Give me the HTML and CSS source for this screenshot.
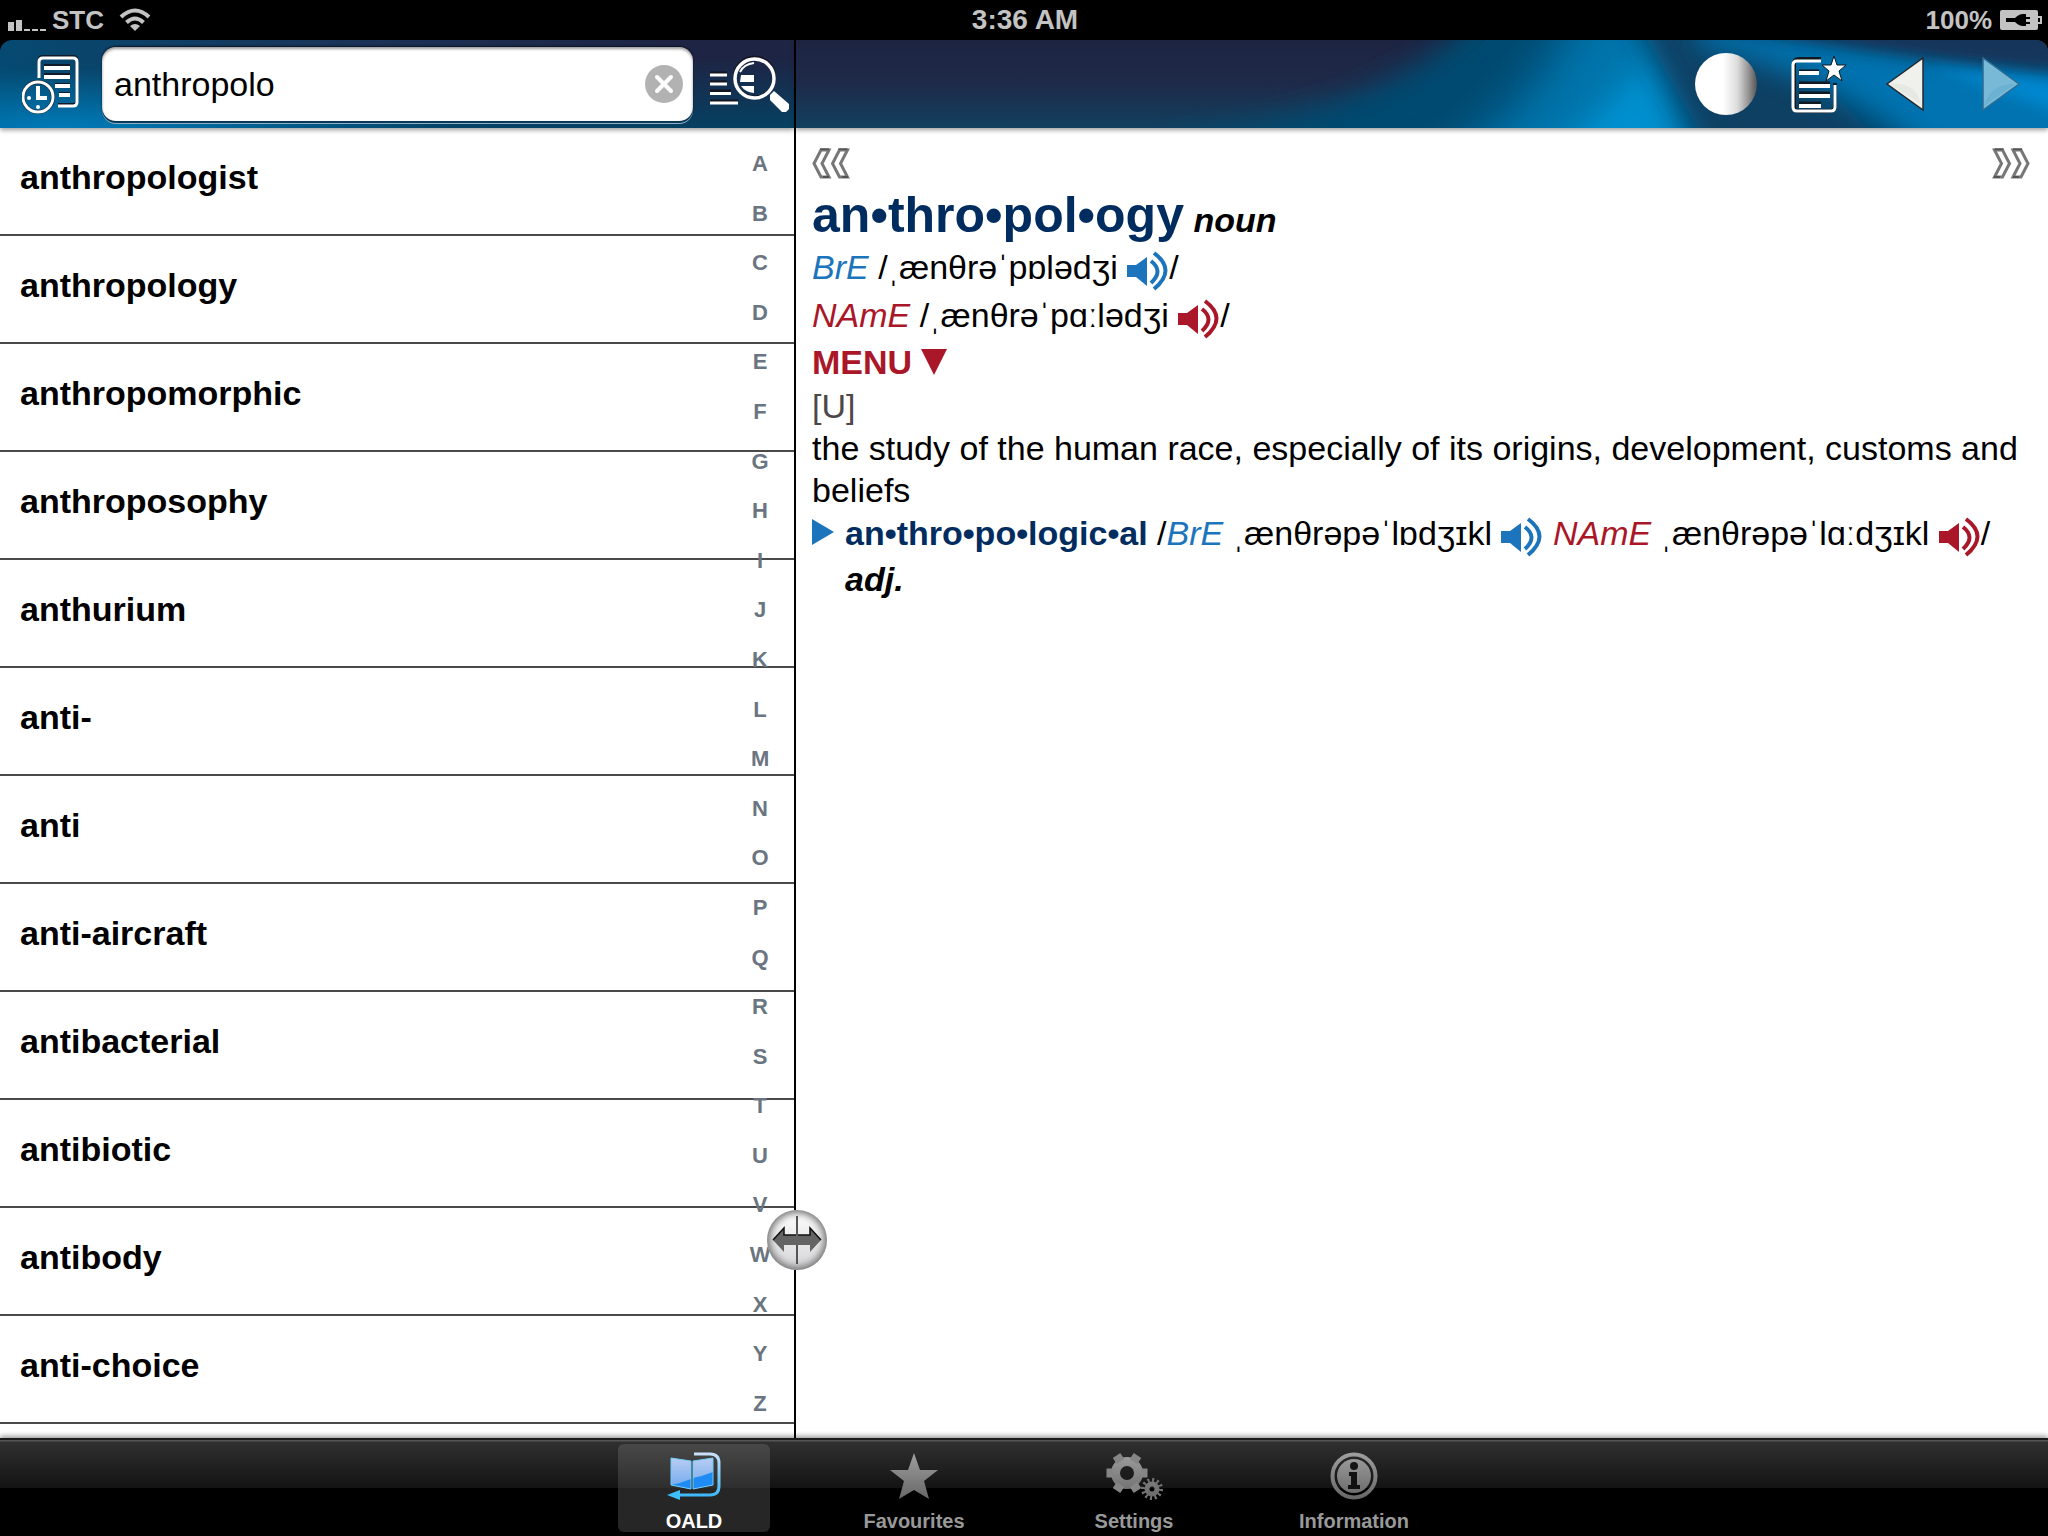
FILE: index.html
```html
<!DOCTYPE html>
<html lang="en">
<head>
    <meta charset="UTF-8">
    <meta name="viewport" content="width=device-width, initial-scale=1.0">
    <title>OALD - anthropology</title>
    <link rel="stylesheet" href="styles.css">
</head>
<body>
    <!-- shared icon shapes -->
    <svg class="defs" aria-hidden="true">
        <symbol id="speaker" viewBox="0 0 42 40">
            <path d="M0 14h9L20 6v29L9 26H0z" fill="currentColor"/>
            <path d="M24 10q13 10 0 22M27 2q23 17 0 36" fill="none" stroke="currentColor" stroke-width="4"/>
        </symbol>
        <symbol id="chevrons" viewBox="0 0 38 31">
            <path d="M9 2h8l-7 13.500l7 13.500h-8L2 15.500z" fill="none" stroke="#777" stroke-width="3"/>
            <path d="M27.500 2h8l-7 13.500l7 13.500h-8l-7-13.500z" fill="none" stroke="#777" stroke-width="3"/>
            <path d="M8 1h9M26.500 1h9M11 29h6M30 29h6" stroke="#333" stroke-width="1"/>
        </symbol>
    </svg>

    <div class="app">
        <header class="status">
            <div class="status-side">
                <svg width="39" height="12" viewBox="0 0 39 12" fill="#c3c3c3"><path d="M0 3h6v9H0zM8 1h6v11H8zM16 10h6v2h-6zM24 10h6v2h-6zM32 10h6v2h-6z"/></svg>
                <span class="carrier">STC</span>
                <svg width="32" height="24" viewBox="0 0 32 24" fill="none" stroke="#c3c3c3" stroke-width="4"><path d="M2 9q14-13 28 0M7.500 14.500q8.500-8 17 0"/><path d="M16 23l-5-5q5-4 10 0z" fill="#c3c3c3" stroke="none"/></svg>
            </div>
            <div class="clock">3:36 AM</div>
            <div class="status-side right">
                <span>100%</span>
                <svg width="42" height="20" viewBox="0 0 42 20"><path d="M2 0h34q2 0 2 2v4h4v8h-4v4q0 2-2 2H2q-2 0-2-2V2q0-2 2-2z" fill="#c3c3c3"/><path d="M38 8h2v4h-2z" fill="#000"/><path d="M6 8h9q4-4 8-4h3v3h4v2h-4v3h4v2h-4v2h-3q-4 0-8-4H6z" fill="#000"/></svg>
            </div>
        </header>

        <div class="panes">
            <aside class="list-pane">
                <div class="toolbar toolbar-left">
                    <button class="tool" type="button" aria-label="History">
                        <svg width="58" height="60" viewBox="0 0 58 60" fill="none">
                            <g stroke="#111a26" stroke-width="3" transform="translate(0 -1.500)"><path d="M17 24V8q0-4 4-4h30q4 0 4 4v40q0 4-4 4H36"/><path d="M22 13h26M22 22h26M33 32h15M37 41h11"/></g>
                            <g stroke="#fff"><path d="M17 24V8q0-4 4-4h30q4 0 4 4v40q0 4-4 4H36" stroke-width="3"/><path d="M22 14h26M22 23h26M33 32h15M37 41h11" stroke-width="4"/><circle cx="16" cy="43" r="15" stroke="#111a26" stroke-width="4"/><circle cx="16" cy="43" r="15" stroke-width="3"/><path d="M16 32v12h9" stroke-width="4"/></g>
                            <g fill="#fff"><circle cx="7" cy="44" r="2"/><circle cx="16" cy="53" r="2"/></g>
                        </svg>
                    </button>
                    <form class="search" role="search">
                        <input type="text" value="anthropolo" aria-label="Search">
                        <button class="clear" type="button" aria-label="Clear">
                            <svg width="38" height="38" viewBox="0 0 38 38"><circle cx="19" cy="19" r="19" fill="#b2b2b2"/><path d="M12 12l14 14M26 12L12 26" stroke="#fff" stroke-width="4" stroke-linecap="round"/></svg>
                        </button>
                    </form>
                    <button class="tool" type="button" aria-label="Full text search">
                        <svg width="80" height="58" viewBox="0 0 80 58" fill="none">
                            <path d="M0 18h17M0 27h17M0 36h21M0 46h28" stroke="#14141f" stroke-width="3"/>
                            <path d="M0 20h17M0 29h17M0 38.500h21M0 48h28" stroke="#fff" stroke-width="3"/>
                            <circle cx="44.500" cy="22" r="20" stroke="#14141f" stroke-width="3"/>
                            <circle cx="44.500" cy="23.500" r="19.500" stroke="#fff" stroke-width="3.500"/>
                            <path d="M31 20h13v7H30zM31 31h13v7q-9-1-13-7z" fill="#fff"/>
                            <path d="M30 17q4-8 14-9" stroke="#fff" stroke-width="2"/>
                            <path d="M60 40l4-4 15 13v5l-3 3h-4L60 45z" fill="#fff"/>
                        </svg>
                    </button>
                </div>
                <div class="words">
                    <ul class="word-list">
                        <li><a href="#">anthropologist</a></li>
                        <li><a href="#">anthropology</a></li>
                        <li><a href="#">anthropomorphic</a></li>
                        <li><a href="#">anthroposophy</a></li>
                        <li><a href="#">anthurium</a></li>
                        <li><a href="#">anti-</a></li>
                        <li><a href="#">anti</a></li>
                        <li><a href="#">anti-aircraft</a></li>
                        <li><a href="#">antibacterial</a></li>
                        <li><a href="#">antibiotic</a></li>
                        <li><a href="#">antibody</a></li>
                        <li><a href="#">anti-choice</a></li>
                    </ul>
                    <nav class="index" aria-label="Letters">
                        <a href="#">A</a><a href="#">B</a><a href="#">C</a><a href="#">D</a><a href="#">E</a><a href="#">F</a><a href="#">G</a><a href="#">H</a><a href="#">I</a><a href="#">J</a><a href="#">K</a><a href="#">L</a><a href="#">M</a><a href="#">N</a><a href="#">O</a><a href="#">P</a><a href="#">Q</a><a href="#">R</a><a href="#">S</a><a href="#">T</a><a href="#">U</a><a href="#">V</a><a href="#">W</a><a href="#">X</a><a href="#">Y</a><a href="#">Z</a>
                    </nav>
                </div>
                <button class="splitter" type="button" aria-label="Resize panes">
                    <svg width="50" height="50" viewBox="0 0 50 50"><path d="M25 1v48" stroke="#555" stroke-width="2"/><path d="M1 25l11-12v7h26v-7l11 12-11 12v-7H12v7z" fill="#646464"/><path d="M1 25l11-12v7h12M26 20h12v-7l11 12" fill="none" stroke="#111" stroke-width="1.500"/></svg>
                </button>
            </aside>

            <main class="entry-pane">
                <div class="toolbar toolbar-right">
                    <svg class="backdrop" viewBox="0 0 1252 88" preserveAspectRatio="none" aria-hidden="true">
                        <defs>
                            <linearGradient id="night" x1="0" y1="0" x2="0" y2="1"><stop offset="0" stop-color="#1d2442"/><stop offset=".5" stop-color="#1e2a49"/><stop offset="1" stop-color="#12405f"/></linearGradient>
                            <filter id="soft" x="-20%" y="-60%" width="140%" height="220%"><feGaussianBlur stdDeviation="14"/></filter>
                            <filter id="soft2" x="-40%" y="-60%" width="180%" height="220%"><feGaussianBlur stdDeviation="24"/></filter>
                            <filter id="soft3" x="-20%" y="-60%" width="140%" height="220%"><feGaussianBlur stdDeviation="7"/></filter>
                        </defs>
                        <rect width="1252" height="88" fill="url(#night)"/>
                        <path d="M380 100Q600 70 685 -30H1290V130H380z" fill="#004a70" filter="url(#soft)"/>
                        <path d="M600 150Q740 80 785 -40H880L910 150z" fill="#0074ac" filter="url(#soft2)"/>
                        <path d="M740 130Q810 70 850 20L895 130z" fill="#0090cf" filter="url(#soft)"/>
                        <path d="M835 -30H960L1110 130H925z" fill="#0b3f63" filter="url(#soft)"/>
                        <path d="M900 -20Q1080 10 1300 35V130H1150Q1060 40 900 5z" fill="#0073b0" filter="url(#soft)"/>
                        <path d="M1130 25L1300 45V88Q1230 60 1130 25z" fill="#0087cf" filter="url(#soft3)"/>
                        <path d="M930 -15H1290V32Q1100 18 930 -15z" fill="#18345a" filter="url(#soft3)"/>
                    </svg>
                    <button class="tool ball" type="button" aria-label="Theme"></button>
                    <button class="tool" type="button" aria-label="Add to favourites">
                        <svg width="62" height="62" viewBox="0 0 62 62" fill="none">
                            <path d="M35 6H13q-5 0-5 5v42q0 5 5 5h31q5 0 5-5V30" stroke="#101820" stroke-width="4"/>
                            <path d="M35 8H11q-4 0-4 4v42q0 4 4 4h34q4 0 4-4V32" stroke="#fff" stroke-width="3"/>
                            <path d="M13 18h20M13 30h31M13 40h31M13 50h22" stroke="#101820" stroke-width="3"/>
                            <path d="M13 20h20M13 33h31M13 43h31M13 53h22" stroke="#fff" stroke-width="4"/>
                            <path d="M48 3l3 9h9l-7 6 3 10-8-6-8 6 3-10-7-6h9z" fill="#fff" stroke="#101820" stroke-width="1"/>
                        </svg>
                    </button>
                    <button class="tool" type="button" aria-label="Back">
                        <svg width="62" height="62" viewBox="0 0 62 62"><path d="M10 31L46 5v52z" fill="#f0f0ec" stroke="#26292c" stroke-width="1.500"/><path d="M13 31Q38 28 44 51z" fill="#e6e8e2"/></svg>
                    </button>
                    <button class="tool" type="button" aria-label="Forward" disabled>
                        <svg width="62" height="62" viewBox="0 0 62 62"><path d="M51 31L15 5v52z" fill="#78b9d8" stroke="#2c6c92" stroke-width="1.500"/><path d="M16 53Q22 31 47 31z" fill="#6cb0d2"/></svg>
                    </button>
                </div>
                <article class="entry">
                    <div class="pager">
                        <button type="button" aria-label="Previous entry"><svg width="38" height="31"><use href="#chevrons"/></svg></button>
                        <button type="button" aria-label="Next entry"><svg class="flip" width="38" height="31"><use href="#chevrons"/></svg></button>
                    </div>
                    <h1>an•thro•pol•ogy<em class="pos"> noun</em></h1>
                    <p class="pron"><i class="bre">BrE</i> /ˌænθrəˈpɒlədʒi <button class="say bre" type="button" aria-label="Play British"><svg width="42" height="40"><use href="#speaker"/></svg></button>/</p>
                    <p class="pron"><i class="name">NAmE</i> /ˌænθrəˈpɑːlədʒi <button class="say name" type="button" aria-label="Play American"><svg width="42" height="40"><use href="#speaker"/></svg></button>/</p>
                    <button class="menu" type="button">MENU <svg width="26" height="26" viewBox="0 0 26 26"><path d="M0 0h26L13 26z" fill="currentColor"/></svg></button>
                    <p class="grammar">[U]</p>
                    <p>the study of the human race, especially of its origins, development, customs and beliefs</p>
                    <div class="derived">
                        <svg width="22" height="26" viewBox="0 0 22 26"><path d="M0 0l22 13L0 26z" fill="#1c75bc"/></svg>
                        <p><b>an•thro•po•logic•al</b> /<i class="bre">BrE</i> ˌænθrəpəˈlɒdʒɪkl <button class="say bre" type="button" aria-label="Play British"><svg width="42" height="40"><use href="#speaker"/></svg></button> <i class="name">NAmE</i> ˌænθrəpəˈlɑːdʒɪkl <button class="say name" type="button" aria-label="Play American"><svg width="42" height="40"><use href="#speaker"/></svg></button>/ <em class="pos">adj.</em></p>
                    </div>
                </article>
            </main>
        </div>

        <nav class="tabs">
            <a class="tab active" href="#">
                <svg width="54" height="50" viewBox="0 0 54 50">
                    <defs>
                        <linearGradient id="page" x1="0" y1="0" x2="0" y2="1"><stop offset="0" stop-color="#b9cdf3"/><stop offset="1" stop-color="#6fa9ee"/></linearGradient>
                        <linearGradient id="loop" gradientUnits="userSpaceOnUse" x1="0" y1="0" x2="0" y2="48"><stop offset="0" stop-color="#cfe2fa"/><stop offset="1" stop-color="#2fb4f8"/></linearGradient>
                    </defs>
                    <path d="M4 6l20 3v28L4 33zM26 9l20-3v27l-20 4z" fill="url(#page)"/>
                    <path d="M4 33q10-2 20-6v10zM26 26q10-2 20-6v13l-20 4z" fill="#1f8cf5"/>
                    <path d="M4 6l20 3v28L4 33zM26 9l20-3v27l-20 4z" fill="none" stroke="#6fcdfa" stroke-width="1"/>
                    <path d="M27 2h16q9 0 9 9v23q0 9-9 9H12" fill="none" stroke="url(#loop)" stroke-width="3"/>
                    <path d="M0 43l13-5v10z" fill="#3cc0fb"/>
                </svg>
                <span>OALD</span>
            </a>
            <a class="tab" href="#">
                <svg width="50" height="50" viewBox="0 0 50 50">
                    <defs><linearGradient id="grey" gradientUnits="userSpaceOnUse" x1="0" y1="0" x2="0" y2="48"><stop offset="0" stop-color="#a0a0a0"/><stop offset="1" stop-color="#666"/></linearGradient></defs>
                    <path d="M25 1l6 17h18L35 29l5 18-15-9-15 9 5-18L1 18h18z" fill="url(#grey)"/>
                </svg>
                <span>Favourites</span>
            </a>
            <a class="tab" href="#">
                <svg width="58" height="50" viewBox="0 0 58 50">
                    <g stroke="url(#grey)" fill="none">
                        <circle cx="22" cy="21" r="11.500" stroke-width="9"/>
                        <path d="M1.500 21h6M36.500 21h6M11.500 3.500l4 6M32.500 3.500l-4 6M11.500 38.500l4-6M32.500 38.500l-4-6" stroke="#858585" stroke-width="9"/>
                        <circle cx="47" cy="37" r="5" stroke-width="5"/>
                        <circle cx="47" cy="37" r="9" stroke="#757575" stroke-width="4" stroke-dasharray="2 2.700"/>
                    </g>
                </svg>
                <span>Settings</span>
            </a>
            <a class="tab" href="#">
                <svg width="50" height="50" viewBox="0 0 50 50">
                    <circle cx="25" cy="24" r="21.500" fill="none" stroke="url(#grey)" stroke-width="4"/>
                    <circle cx="25" cy="24" r="17" fill="url(#grey)"/>
                    <path d="M20 20h8v13h3v4H19v-4h3V24h-2z" fill="#111"/><circle cx="25" cy="14" r="4" fill="#151515"/>
                </svg>
                <span>Information</span>
            </a>
        </nav>
    </div>
</body>
</html>
```
FILE: styles.css
```css
* {
    box-sizing: border-box;
}
body {
    margin: 0;
    font-family: "Liberation Sans", Arial, sans-serif;
    font-size: 34px;
    background: #000;
    color: #000;
}
button {
    border: 0;
    padding: 0;
    background: none;
    font: inherit;
    color: inherit;
    cursor: pointer;
}
a {
    color: inherit;
    text-decoration: none;
}
svg {
    display: block;
}
.defs {
    position: absolute;
    width: 0;
    height: 0;
}
.app {
    display: flex;
    flex-direction: column;
    height: 100vh;
}

/* status bar */
.status {
    display: flex;
    align-items: center;
    height: 40px;
    padding: 0 6px 0 8px;
    color: #c3c3c3;
    font-size: 26px;
    font-weight: bold;
}
.status-side {
    display: flex;
    flex: 1;
    align-items: center;
    gap: 5px;
}
.status-side > svg:first-child {
    margin-top: 10px;
}
.carrier {
    margin-right: 10px;
}
.status-side.right {
    justify-content: flex-end;
    gap: 8px;
}
.clock {
    font-size: 28px;
}

/* panes */
.panes {
    display: flex;
    flex: 1;
    min-height: 0;
}
.list-pane {
    position: relative;
    display: flex;
    flex-direction: column;
    width: 38.87%;
    border-right: 2px solid #000;
}
.entry-pane {
    display: flex;
    flex: 1;
    flex-direction: column;
    min-width: 0;
}
.toolbar {
    position: relative;
    z-index: 1;
    display: flex;
    flex: none;
    align-items: center;
    height: 88px;
    box-shadow: 0 2px 5px rgba(0,0,0,0.4);
}
.tool {
    flex: none;
}
.toolbar-left {
    gap: 17px;
    padding: 0 4px 0 22px;
    border-top-left-radius: 12px;
    background:
        radial-gradient(ellipse 400px 60px at 60px 100%, #007ab8, rgba(0,122,184,0)),
        linear-gradient(to bottom, rgba(0,76,112,0) 20%, rgba(0,72,106,0.8)),
        linear-gradient(to right, #054a72, #1b3357 45%, #1e2444 85%);
}
.toolbar-right {
    justify-content: flex-end;
    gap: 29px;
    padding-right: 18px;
    border-top-right-radius: 12px;
}
.backdrop {
    position: absolute;
    top: 0;
    left: 0;
    width: 100%;
    height: 100%;
    border-top-right-radius: 12px;
}
.toolbar-right .tool {
    z-index: 1;
}
.ball {
    width: 62px;
    height: 62px;
    border-radius: 50%;
    background: linear-gradient(to right, #fff 45%, #ddd 68%, #999 85%, #555);
}
.search {
    display: flex;
    flex: 1;
    align-items: center;
    height: 74px;
    min-width: 0;
    margin-left: 5px;
    padding: 0 10px 0 12px;
    border-radius: 14px;
    background: #fff;
    box-shadow: inset 0 2px 3px rgba(0,0,0,0.4), 0 -1px 2px #0a1426, 0 2px 0 #0a3a5a, 0 3px 0 #8fb0c6;
}
.search input {
    flex: 1;
    min-width: 0;
    border: 0;
    padding: 0;
    outline: 0;
    background: none;
    font: inherit;
}

/* word list */
.words {
    position: relative;
    flex: 1;
    min-height: 0;
    overflow: hidden;
    background: #fff;
}
.word-list {
    margin: 0;
    padding: 0;
    list-style: none;
    font-weight: bold;
}
.word-list a {
    display: flex;
    align-items: center;
    height: 108px;
    padding: 0 20px 8px;
    border-bottom: 2px solid #4a4a4a;
}
.index {
    position: absolute;
    top: 24px;
    right: 22px;
    bottom: 22px;
    display: flex;
    flex-direction: column;
    justify-content: space-between;
    width: 24px;
    color: #6b7582;
    font-size: 22px;
    font-weight: bold;
    line-height: 24px;
    text-align: center;
}
.splitter {
    position: absolute;
    right: -33px;
    bottom: 168px;
    z-index: 2;
    width: 60px;
    height: 60px;
    padding: 5px;
    border-radius: 50%;
    background: linear-gradient(#fff, #d4d4d8);
    box-shadow: inset 0 0 7px 3px #777;
}

/* entry */
.entry {
    flex: 1;
    padding: 20px 18px 20px 16px;
    background: #fff;
    line-height: 42px;
}
.entry p {
    margin: 0;
}
.pager {
    display: flex;
    justify-content: space-between;
    margin-bottom: 8px;
}
.flip {
    transform: scaleX(-1);
}
.entry h1 {
    margin: 0;
    color: #002c5f;
    font-size: 50px;
    line-height: 56px;
}
.pos {
    color: #000;
    font-size: 34px;
    font-weight: bold;
}
.entry h1 .pos {
    line-height: 34px;
}
.entry .pron {
    line-height: 48px;
}
.bre {
    color: #1c75bc;
}
.name {
    color: #aa1728;
}
.say {
    height: 40px;
    vertical-align: -12px;
}
.menu {
    display: flex;
    align-items: center;
    gap: 9px;
    color: #aa1728;
    font-weight: bold;
    line-height: 46px;
}
.grammar {
    color: #4d4848;
}
.derived {
    display: flex;
    gap: 11px;
    line-height: 44px;
}
.derived > svg {
    flex: none;
    margin-top: 8px;
}
.derived b {
    color: #002c5f;
}
.derived .pos {
    display: block;
}

/* tab bar */
.tabs {
    display: flex;
    flex: none;
    justify-content: center;
    gap: 68px;
    height: 98px;
    padding: 4px 0;
    border-top: 2px solid #1a1a1a;
    background: linear-gradient(to bottom, #555 0, #555 1px, #303030 2px, #131313 48px, #000 48px);
    box-shadow: 0 -2px 5px rgba(0,0,0,0.4);
    z-index: 1;
}
.tab {
    display: flex;
    flex-direction: column;
    align-items: center;
    justify-content: space-between;
    width: 152px;
    padding-top: 8px;
    border-radius: 6px;
    color: #999;
    font-size: 20px;
    font-weight: bold;
    line-height: 22px;
}
.tab.active {
    background: linear-gradient(to bottom, #484848, #2e2e2e 44px, #262626 44px);
    color: #fff;
}
```
